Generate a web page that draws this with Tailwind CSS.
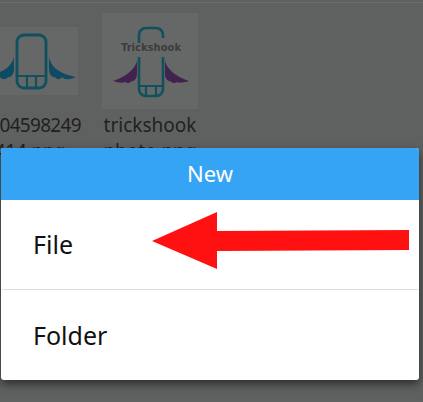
<!DOCTYPE html>
<html lang="en">
<head>
  <meta charset="UTF-8" />
  <title>New</title>
  <script src="https://cdn.jsdelivr.net/npm/@tailwindcss/browser@4"></script>
</head>
<body class="bg-[#5f6160] font-['Noto_Sans',sans-serif] overflow-hidden">
  <div class="relative w-[423px] h-[402px] overflow-hidden">
    <div class="h-[3px] border-b border-[#6a6c6b]"></div>

    <!-- file grid behind the dim layer -->
    <div class="flex items-start ml-[-18px] mt-[10px] gap-[24px] text-[#1f2120] text-[19px] leading-[26px] text-center">
      <div class="w-[96px] shrink-0">
        <div class="h-[96px] flex items-center">
          <div class="w-full h-[68px] bg-[#666867]">
            <svg viewBox="0 0 96 68" class="w-full h-full">
              <rect x="35" y="8" width="29" height="53" rx="7" fill="none" stroke="#11505f" stroke-width="2.8"/>
              <path d="M35 49H64M45 49V61M54 49V61" fill="none" stroke="#11505f" stroke-width="2.2"/>
              <path d="M32 30C30 38 24 45 3 50C10 53 15 52 18 50C20 53 24 53 26 50C29 51 32 47 32 42Z" fill="#0f4a64"/>
              <path d="M67 30C69 39 75 46 94 50C87 53 83 53 80 50C78 53 75 53 73 50C70 51 67 47 67 42Z" fill="#0f4a64"/>
            </svg>
          </div>
        </div>
        <div class="mt-[3px] flex justify-center whitespace-nowrap tracking-[-0.7px]">1504598249</div>
        <div class="flex justify-center whitespace-nowrap tracking-[-0.3px]">414.png</div>
      </div>
      <div class="w-[96px] shrink-0">
        <div class="h-[96px] bg-[#666867]">
          <svg viewBox="0 0 96 96" class="w-full h-full">
            <path d="M37 30V22C37 18 40 15 44 15H54C58 15 61 18 61 22V25" fill="none" stroke="#11505f" stroke-width="2.6"/>
            <path d="M37 44V76C37 80 40 83 44 83H54C58 83 61 80 61 76V44" fill="none" stroke="#11505f" stroke-width="2.6"/>
            <path d="M37 73H61M44 73V83M54 73V83" fill="none" stroke="#11505f" stroke-width="2.2"/>
            <path d="M35 48C33 56 24 64 11 68C17 70 21 70 23 69C25 71 28 70 30 68C32 69 35 65 35 61Z" fill="#42224f"/>
            <path d="M63 48C65 56 74 64 87 68C81 70 77 70 75 69C73 71 70 70 68 68C66 69 63 65 63 61Z" fill="#42224f"/>
            <text x="49" y="38" text-anchor="middle" font-family="DejaVu Sans" font-weight="700" font-size="10" fill="#3a3d3d">Trickshook</text>
          </svg>
        </div>
        <div class="mt-[3px] flex justify-center whitespace-nowrap">trickshook</div>
        <div class="flex justify-center whitespace-nowrap">photo.png</div>
      </div>
    </div>

    <!-- dialog -->
    <div class="absolute left-[1px] top-[148px] w-[418px] h-[232px] bg-white rounded-[3px] overflow-hidden shadow-[0_4px_10px_rgba(0,0,0,0.55)]">
      <div class="h-[52px] bg-[#36a4f5] flex items-center justify-center pb-[2px] text-white text-[22px]">New</div>
      <div class="h-[89px] flex items-center pl-[32px] text-[#111] text-[25px]">File</div>
      <div class="h-px mx-px bg-[#dedede]"></div>
      <div class="h-[90px] flex items-center pl-[32px] pt-[2px] text-[#111] text-[25px]">Folder</div>
    </div>

    <!-- red arrow drawn on the screenshot -->
    <svg class="absolute left-0 top-0" width="423" height="402" viewBox="0 0 423 402">
      <path d="M152 241L217 212V231L409 230V250L217 251V269Z" fill="#ff1111"/>
    </svg>
  </div>
</body>
</html>
